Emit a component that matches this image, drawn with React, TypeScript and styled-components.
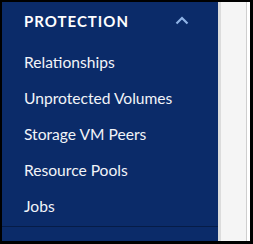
import React from 'react'
import styled, { createGlobalStyle } from 'styled-components'

const GlobalStyle = createGlobalStyle`
  html, body {
    margin: 0;
    padding: 0;
    background: #000;
  }
`

const Frame = styled.div`
  width: 253px;
  height: 244px;
  box-sizing: border-box;
  border-style: solid;
  border-color: #000;
  border-width: 2px 3px 3px 2px;
  display: flex;
  background: #fff;
  overflow: hidden;
`

const Sidebar = styled.nav`
  width: 216px;
  flex-shrink: 0;
  background: #0b2b69;
  color: #fff;
  font-family: Lato, 'Liberation Sans', sans-serif;
  display: flex;
  flex-direction: column;
`

const Header = styled.div`
  height: 42px;
  box-sizing: border-box;
  padding: 0 29px 5px 22px;
  display: flex;
  align-items: center;
  justify-content: space-between;
`

const Title = styled.span`
  font-size: 15px;
  font-weight: 700;
  letter-spacing: 1px;
`

const List = styled.ul`
  list-style: none;
  margin: 0;
  padding: 0 0 2px;
  border-bottom: 1px solid #061c47;
`

const Item = styled.li`
  height: 36px;
  padding-left: 22px;
  display: flex;
  align-items: center;
  font-size: 15.6px;
  color: #f2f4f8;
`

const Gutter = styled.div`
  width: 3px;
  background: #dcdcdc;
`

const Content = styled.div`
  flex: 1;
  background: #f5f5f5;
  border-right: 1px solid #cfcfcf;
`

const Edge = styled.div`
  width: 3px;
  background: #fff;
`

const items = ['Relationships', 'Unprotected Volumes', 'Storage VM Peers', 'Resource Pools', 'Jobs']

export default function App() {
  return (
    <>
      <GlobalStyle />
      <Frame>
        <Sidebar>
          <Header>
            <Title>PROTECTION</Title>
            <svg width="14" height="9" viewBox="0 0 14 9">
              <polyline points="1.5,7.5 7,2 12.5,7.5" fill="none" stroke="#8fb3e6" strokeWidth="2.2" />
            </svg>
          </Header>
          <List>
            {items.map((label) => (
              <Item key={label}>{label}</Item>
            ))}
          </List>
        </Sidebar>
        <Gutter />
        <Content />
        <Edge />
      </Frame>
    </>
  )
}
